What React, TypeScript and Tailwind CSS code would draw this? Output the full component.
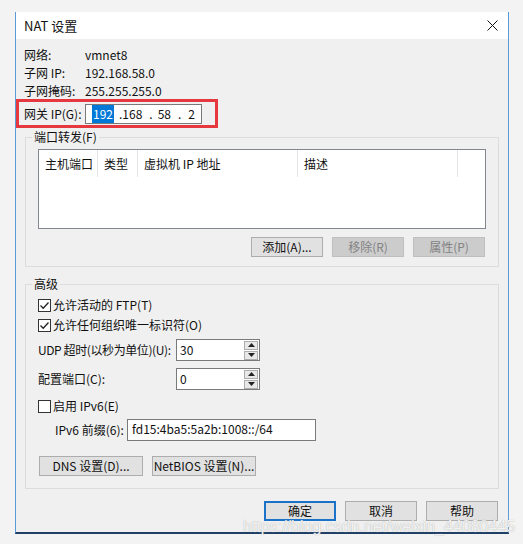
const font = "font-['Microsoft_YaHei_UI','Noto_Sans_CJK_SC',sans-serif]";

function Btn({label, w = 72, disabled = false, primary = false}: {label: string; w?: number; disabled?: boolean; primary?: boolean}) {
  const base = 'flex h-[20px] items-center justify-center whitespace-nowrap text-[12px] leading-none';
  const look = disabled
    ? 'border border-[#bfbfbf] bg-[#cccccc] text-[#838383]'
    : primary
      ? 'border-2 border-[#1a73c8] bg-[#e1e1e1] text-[#111]'
      : 'border border-[#adadad] bg-[#e1e1e1] text-[#111]';
  return (
    <div className={`${base} ${look}`} style={{width: w}}>
      {label}
    </div>
  );
}

function Check({label, checked}: {label: string; checked: boolean}) {
  return (
    <div className="flex h-[20px] items-center">
      <span className="flex h-[13px] w-[13px] items-center justify-center border border-[#333] bg-white">
        {checked && (
          <svg width="11" height="11" viewBox="0 0 11 11">
            <path d="M1.5 5.5 L4.2 8.2 L9.5 2.5" fill="none" stroke="#222" strokeWidth="1.3" />
          </svg>
        )}
      </span>
      <span className="ml-[2px] whitespace-nowrap text-[12px] text-[#111]">{label}</span>
    </div>
  );
}

function Spin({value}: {value: string}) {
  return (
    <div className="flex h-[22px] w-[84px] items-center justify-between border border-[#7a7a7a] bg-white pl-[3px] pr-[1px]">
      <span className="text-[12px] text-[#111]">{value}</span>
      <div className="flex flex-col gap-[1px]">
        <span className="flex h-[9px] w-[14px] items-center justify-center border border-[#adadad] bg-[#e8e8e8]">
          <svg width="7" height="4" viewBox="0 0 7 4"><path d="M0 4 L3.5 0 L7 4Z" fill="#222" /></svg>
        </span>
        <span className="flex h-[9px] w-[14px] items-center justify-center border border-[#adadad] bg-[#e8e8e8]">
          <svg width="7" height="4" viewBox="0 0 7 4"><path d="M0 0 L3.5 4 L7 0Z" fill="#222" /></svg>
        </span>
      </div>
    </div>
  );
}

export default function App() {
  return (
    <div className={`relative h-[544px] w-[523px] overflow-hidden bg-[#f3f3f3] pl-[15px] pt-[12px] ${font}`}>
      <div className="flex h-[522px] w-[494px] flex-col border-x border-[#5b9bd5] border-b-2 border-b-[#1f3f66]">
        <div className="flex h-[27px] shrink-0 items-center justify-between bg-white pl-[8px] pr-[10px]">
          <span className="text-[13px] text-[#111]">NAT 设置</span>
          <svg width="11" height="11" viewBox="0 0 11 11">
            <path d="M0.5 0.5 L10.5 10.5 M10.5 0.5 L0.5 10.5" stroke="#111" strokeWidth="1" />
          </svg>
        </div>
        <div className="flex-1 bg-[#f0f0f0] text-[12px] text-[#111]">
          <div className="mt-[7px] pl-[8px]">
            <div className="flex h-[18px] items-center"><span className="w-[61px]">网络:</span><span>vmnet8</span></div>
            <div className="flex h-[18px] items-center"><span className="w-[61px]">子网 IP:</span><span>192.168.58.0</span></div>
            <div className="flex h-[18px] items-center"><span className="w-[61px]">子网掩码:</span><span>255.255.255.0</span></div>
          </div>
          <div className="relative z-10 -mt-[1px] flex h-[29px] w-[202px] items-center border-[3px] border-[#e5393f] pl-[5px]">
            <span className="w-[61px] whitespace-nowrap">网关 IP(G):</span>
            <div className="flex h-[20px] w-[117px] items-center border border-[#7a7a7a] bg-white pl-[6px]">
              <span className="bg-[#0078d7] px-[1px] text-white">192</span>
              <span className="ml-[5px]">.168</span>
              <span className="ml-[7px]">.</span>
              <span className="ml-[5px]">58</span>
              <span className="ml-[7px]">.</span>
              <span className="ml-[7px]">2</span>
            </div>
          </div>

          <fieldset className="mx-[9px] mt-[1px] border border-[#dcdcdc] px-[12px] pb-[9px] pt-[4px]">
            <legend className="-ml-[6px] px-[2px] leading-[16px]">端口转发(F)</legend>
            <div className="h-[80px] border border-[#828790] bg-white">
              <div className="flex h-[27px] items-center">
                <span className="flex h-full w-[59px] items-center border-r border-[#e5e5e5] pl-[6px]">主机端口</span>
                <span className="flex h-full w-[40px] items-center border-r border-[#e5e5e5] pl-[6px]">类型</span>
                <span className="flex h-full w-[160px] items-center border-r border-[#e5e5e5] pl-[6px]">虚拟机 IP 地址</span>
                <span className="flex h-full w-[160px] items-center border-r border-[#e5e5e5] pl-[6px]">描述</span>
              </div>
            </div>
            <div className="mt-[8px] flex justify-end gap-[9px] pr-[1px]">
              <Btn label="添加(A)..." />
              <Btn label="移除(R)" disabled />
              <Btn label="属性(P)" disabled />
            </div>
          </fieldset>

          <fieldset className="mx-[9px] mt-[9px] border border-[#dcdcdc] px-[12px] pb-[12px] pt-[3px]">
            <legend className="-ml-[6px] px-[2px] leading-[16px]">高级</legend>
            <Check label="允许活动的 FTP(T)" checked />
            <Check label="允许任何组织唯一标识符(O)" checked />
            <div className="mt-[4px] flex items-center">
              <span className="w-[138px] whitespace-nowrap tracking-[-0.4px]">UDP 超时(以秒为单位)(U):</span>
              <Spin value="30" />
            </div>
            <div className="mt-[7px] flex items-center">
              <span className="w-[138px] whitespace-nowrap">配置端口(C):</span>
              <Spin value="0" />
            </div>
            <div className="mt-[6px]">
              <Check label="启用 IPv6(E)" checked={false} />
            </div>
            <div className="mt-[3px] flex items-center pl-[17px]">
              <span className="w-[72px] whitespace-nowrap">IPv6 前缀(6):</span>
              <div className="flex h-[22px] w-[189px] items-center border border-[#7a7a7a] bg-white pb-[2px] pl-[4px]">
                fd15:4ba5:5a2b:1008::/64
              </div>
            </div>
            <div className="mt-[15px] flex gap-[9px] pl-[1px]">
              <Btn label="DNS 设置(D)..." w={104} />
              <Btn label="NetBIOS 设置(N)..." w={104} />
            </div>
          </fieldset>

          <div className="mt-[12px] flex justify-end gap-[9px] pr-[10px]">
            <Btn label="确定" primary />
            <Btn label="取消" />
            <Btn label="帮助" />
          </div>
        </div>
      </div>
      <span className="absolute left-[243px] top-[515px] whitespace-nowrap font-['Liberation_Sans',sans-serif] text-[16px] text-white/85 [text-shadow:0_0_1px_#9a9a9a]">
        https://blog.csdn.net/weixin_44080445
      </span>
    </div>
  );
}
